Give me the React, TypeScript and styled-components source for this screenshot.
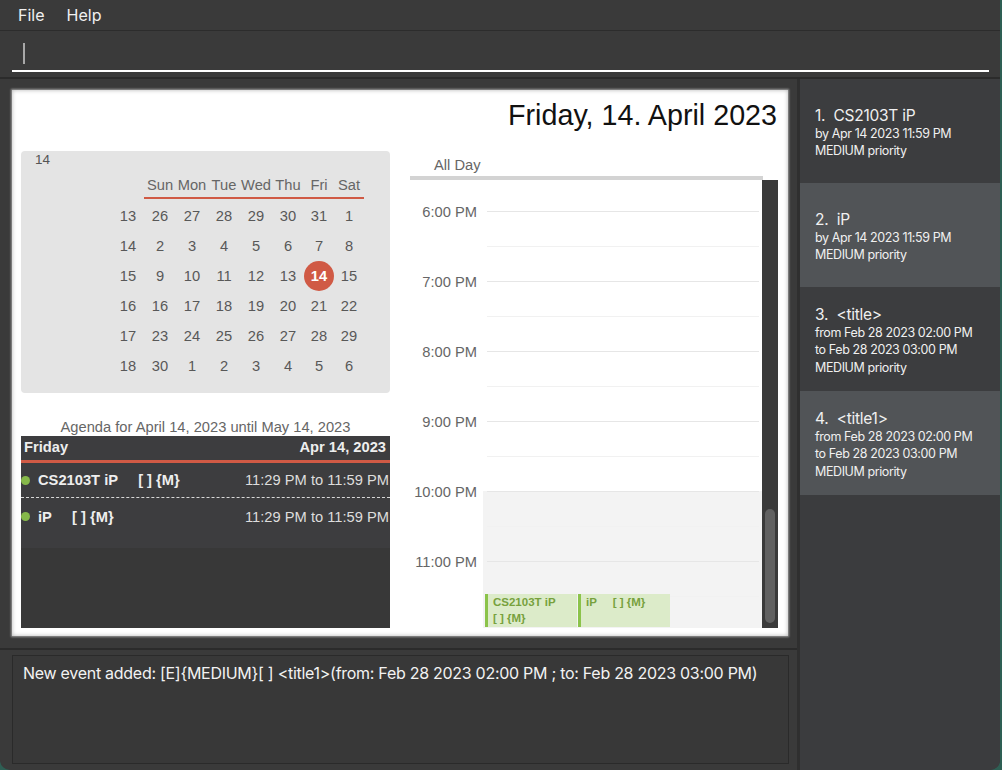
import React from "react";
import styled, { createGlobalStyle } from "styled-components";

const UI = `"Inter", "Noto Sans", sans-serif`;
const CAL = `"Liberation Sans", Arial, sans-serif`;
const CAL_SIZE = "14.7px";

const GlobalStyle = createGlobalStyle`
  * { box-sizing: border-box; }
  html, body { margin: 0; padding: 0; background: #2e5f54; }
  body { width: 1002px; height: 770px; overflow: hidden; }
`;

const Window = styled.div`
  width: 1000px;
  height: 770px;
  background: #3a3a3a;
  display: flex;
  flex-direction: column;
  border-radius: 0 0 10px 10px;
  overflow: hidden;
  font-family: ${UI};
`;

const MenuBar = styled.div`
  height: 31px;
  flex: none;
  display: flex;
  align-items: center;
  gap: 22px;
  padding-left: 18px;
  border-bottom: 1px solid #2c2c2c;
  color: #f0f0f0;
  font-size: 16px;
`;

const MenuItem = styled.span`
  line-height: 20px;
`;

const CommandBar = styled.div`
  height: 48px;
  flex: none;
  padding: 0 11px 5px 12px;
  border-bottom: 2px solid #2b2b2b;
`;

const CommandInput = styled.div`
  height: 41px;
  border-bottom: 2px solid #ffffff;
  padding: 12px 0 0 11px;
`;

const Caret = styled.div`
  width: 2px;
  height: 21px;
  background: #a8a8a8;
`;

const Main = styled.div`
  flex: 1;
  display: flex;
  min-height: 0;
`;

const LeftColumn = styled.div`
  width: 797px;
  flex: none;
  display: flex;
  flex-direction: column;
`;

const CalendarWrap = styled.div`
  height: 571px;
  flex: none;
  padding: 11px 9px 12px 12px;
  border-bottom: 2px solid #2b2b2b;
`;

const CalendarPanel = styled.div`
  height: 100%;
  background: #ffffff;
  box-shadow: 0 0 2px 1px rgba(170, 170, 170, 0.85), inset 0 0 4px rgba(0, 0, 0, 0.3);
  padding: 0 10px 8px 9px;
  display: flex;
  flex-direction: column;
  font-family: ${CAL};
`;

const DateTitle = styled.div`
  text-align: right;
  padding: 9px 1px 0 0;
  font-size: 28.7px;
  line-height: 32px;
  color: #111111;
`;

const CalendarBody = styled.div`
  flex: 1;
  margin-top: 20px;
  display: grid;
  grid-template-columns: 369px 368px;
  column-gap: 20px;
  min-height: 0;
`;

const LeftPane = styled.div`
  display: flex;
  flex-direction: column;
  min-height: 0;
`;

const MonthBox = styled.div`
  height: 242px;
  flex: none;
  background: #e4e4e4;
  border-radius: 4px;
  padding-top: 1px;
  color: #555555;
`;

const MonthLabel = styled.div`
  margin-left: 14px;
  font-size: 13.5px;
  line-height: 16px;
  color: #555555;
`;

const MonthGrid = styled.div`
  margin-left: 91px;
  display: grid;
  grid-template-columns: 32px 32px 32px 32px 32px 32px 30px 30px;
`;

const HeaderCell = styled.div<{ $blank?: boolean }>`
  padding: 9px 0 4px;
  line-height: 16px;
  font-size: ${CAL_SIZE};
  text-align: center;
  white-space: nowrap;
  color: #666666;
  border-bottom: 2px solid ${(p) => (p.$blank ? "transparent" : "#d05a45")};
  margin-bottom: 2px;
`;

const DayCell = styled.div`
  height: 30px;
  display: flex;
  align-items: center;
  justify-content: center;
  font-size: ${CAL_SIZE};
  color: #585858;
`;

const TodayMark = styled.span`
  width: 30px;
  height: 30px;
  border-radius: 50%;
  background: #d05a45;
  color: #ffffff;
  font-weight: bold;
  display: flex;
  align-items: center;
  justify-content: center;
`;

const AgendaLabel = styled.div`
  margin-top: 26px;
  margin-bottom: 1px;
  text-align: center;
  font-size: ${CAL_SIZE};
  line-height: 16px;
  color: #666666;
`;

const AgendaBox = styled.div`
  flex: 1;
  background: #383838;
  min-height: 0;
`;

const AgendaGroup = styled.div`
  background: #3d3d3f;
  padding-bottom: 13px;
`;

const AgendaHeader = styled.div`
  height: 27px;
  display: flex;
  justify-content: space-between;
  align-items: center;
  padding: 0 4px 3px 3px;
  border-bottom: 3px solid #d05a45;
  color: #eeeeee;
  font-weight: bold;
  font-size: ${CAL_SIZE};
`;

const AgendaRow = styled.div`
  height: 34px;
  display: flex;
  align-items: center;
  padding-right: 1px;
  font-size: ${CAL_SIZE};
  & + & {
    height: 38px;
    border-top: 1px dashed #d8d8d8;
  }
`;

const Dot = styled.span`
  width: 9px;
  height: 9px;
  border-radius: 50%;
  background: #86b84a;
  flex: none;
  margin-right: 8px;
`;

const AgendaTitle = styled.span`
  flex: 1;
  white-space: pre;
  font-weight: bold;
  color: #eeeeee;
`;

const AgendaTime = styled.span`
  color: #dddddd;
`;

const DayView = styled.div`
  display: flex;
  flex-direction: column;
  min-height: 0;
`;

const AllDayLabel = styled.div`
  padding: 6px 0 0 24px;
  margin-bottom: 3px;
  font-size: ${CAL_SIZE};
  line-height: 16px;
  color: #666666;
`;

const AllDayBar = styled.div`
  width: 353px;
  height: 4px;
  background: #d3d3d3;
`;

const DayScroll = styled.div`
  flex: 1;
  display: flex;
  min-height: 0;
`;

const TimeGrid = styled.div`
  flex: 1;
  overflow: hidden;
  display: grid;
  grid-template-columns: 73px 1fr;
  grid-auto-rows: 70px;
  grid-template-rows: 31px;
  align-content: start;
`;

const TimeLabel = styled.div`
  text-align: right;
  padding-right: 6px;
  font-size: ${CAL_SIZE};
  line-height: 16px;
  margin-top: -7px;
  color: #666666;
`;

const HourSlot = styled.div<{ $shaded?: boolean }>`
  background-color: ${(p) => (p.$shaded ? "#f3f3f3" : "transparent")};
  background-image: linear-gradient(#e6e6e6, #e6e6e6), linear-gradient(#f1f1f1, #f1f1f1);
  background-repeat: no-repeat;
  background-position: 4px 0, 4px 35px;
  background-size: calc(100% - 7px) 1px, calc(100% - 7px) 1px;
  display: flex;
  align-items: flex-start;
  gap: 1px;
  padding: 33px 0 0 2px;
  overflow: hidden;
`;

const LeadSlot = styled.div``;

const EventBlock = styled.div`
  width: 92px;
  height: 33px;
  flex: none;
  background: #dcebc9;
  border-left: 3px solid #8bc34a;
  padding: 0 0 0 5px;
  font-size: 11.5px;
  line-height: 16px;
  font-weight: bold;
  color: #77a13d;
  white-space: pre-wrap;
  overflow: hidden;
`;

const ScrollTrack = styled.div`
  width: 16px;
  flex: none;
  background: #3a3a3a;
  display: flex;
  flex-direction: column;
  justify-content: flex-end;
  padding: 0 3px 5px 3px;
`;

const ScrollThumb = styled.div`
  height: 114px;
  border-radius: 5px;
  background: #616161;
`;

const ResultWrap = styled.div`
  flex: 1;
  padding: 5px 8px 6px 12px;
`;

const ResultBox = styled.div`
  height: 100%;
  border: 1px solid #2a2a2a;
  background: #383838;
  padding: 8px 10px;
  color: #f2f2f2;
  font-size: 16px;
  letter-spacing: -0.28px;
  line-height: 19px;
`;

const TaskList = styled.div`
  width: 203px;
  flex: none;
  background: #3b3c3e;
  border-left: 3px solid #2f2f2f;
  display: flex;
  flex-direction: column;
`;

const TaskCard = styled.div<{ $alt?: boolean }>`
  height: 104px;
  flex: none;
  background: ${(p) => (p.$alt ? "#515457" : "#3c3d3f")};
  padding: 3px 0 0 15px;
  display: flex;
  flex-direction: column;
  justify-content: center;
  color: #f0f0f0;
`;

const TaskTitle = styled.div`
  font-size: 15.5px;
  letter-spacing: -0.25px;
  line-height: 19px;
  white-space: pre;
`;

const TaskLine = styled.div`
  font-size: 12.5px;
  letter-spacing: -0.4px;
  line-height: 17.5px;
`;

const weeks: [number, number[]][] = [
  [13, [26, 27, 28, 29, 30, 31, 1]],
  [14, [2, 3, 4, 5, 6, 7, 8]],
  [15, [9, 10, 11, 12, 13, 14, 15]],
  [16, [16, 17, 18, 19, 20, 21, 22]],
  [17, [23, 24, 25, 26, 27, 28, 29]],
  [18, [30, 1, 2, 3, 4, 5, 6]],
];

const dayNames = ["Sun", "Mon", "Tue", "Wed", "Thu", "Fri", "Sat"];

const hours = ["6:00 PM", "7:00 PM", "8:00 PM", "9:00 PM", "10:00 PM", "11:00 PM"];

const tasks = [
  { title: "1.  CS2103T iP", lines: ["by Apr 14 2023 11:59 PM", "MEDIUM priority"] },
  { title: "2.  iP", lines: ["by Apr 14 2023 11:59 PM", "MEDIUM priority"] },
  {
    title: "3.  <title>",
    lines: ["from Feb 28 2023 02:00 PM", "to Feb 28 2023 03:00 PM", "MEDIUM priority"],
  },
  {
    title: "4.  <title1>",
    lines: ["from Feb 28 2023 02:00 PM", "to Feb 28 2023 03:00 PM", "MEDIUM priority"],
  },
];

export default function App() {
  return (
    <>
      <GlobalStyle />
      <Window>
        <MenuBar>
          <MenuItem>File</MenuItem>
          <MenuItem>Help</MenuItem>
        </MenuBar>
        <CommandBar>
          <CommandInput>
            <Caret />
          </CommandInput>
        </CommandBar>
        <Main>
          <LeftColumn>
            <CalendarWrap>
              <CalendarPanel>
                <DateTitle>Friday, 14. April 2023</DateTitle>
                <CalendarBody>
                  <LeftPane>
                    <MonthBox>
                      <MonthLabel>14</MonthLabel>
                      <MonthGrid>
                        <HeaderCell $blank />
                        {dayNames.map((d) => (
                          <HeaderCell key={d}>{d}</HeaderCell>
                        ))}
                        {weeks.map(([wk, days]) => (
                          <React.Fragment key={wk}>
                            <DayCell>{wk}</DayCell>
                            {days.map((d, i) => (
                              <DayCell key={i}>
                                {wk === 15 && d === 14 ? <TodayMark>14</TodayMark> : d}
                              </DayCell>
                            ))}
                          </React.Fragment>
                        ))}
                      </MonthGrid>
                    </MonthBox>
                    <AgendaLabel>Agenda for April 14, 2023 until May 14, 2023</AgendaLabel>
                    <AgendaBox>
                      <AgendaGroup>
                        <AgendaHeader>
                          <span>Friday</span>
                          <span>Apr 14, 2023</span>
                        </AgendaHeader>
                        <AgendaRow>
                          <Dot />
                          <AgendaTitle>{"CS2103T iP     [ ] {M}"}</AgendaTitle>
                          <AgendaTime>11:29 PM to 11:59 PM</AgendaTime>
                        </AgendaRow>
                        <AgendaRow>
                          <Dot />
                          <AgendaTitle>{"iP     [ ] {M}"}</AgendaTitle>
                          <AgendaTime>11:29 PM to 11:59 PM</AgendaTime>
                        </AgendaRow>
                      </AgendaGroup>
                    </AgendaBox>
                  </LeftPane>
                  <DayView>
                    <AllDayLabel>All Day</AllDayLabel>
                    <AllDayBar />
                    <DayScroll>
                      <TimeGrid>
                        <LeadSlot />
                        <LeadSlot />
                        {hours.map((h, i) => (
                          <React.Fragment key={h}>
                            <TimeLabel>{h}</TimeLabel>
                            <HourSlot $shaded={i >= 4}>
                              {i === 5 && (
                                <>
                                  <EventBlock>{"CS2103T iP     [\u00a0] {M}"}</EventBlock>
                                  <EventBlock>{"iP     [\u00a0] {M}"}</EventBlock>
                                </>
                              )}
                            </HourSlot>
                          </React.Fragment>
                        ))}
                      </TimeGrid>
                      <ScrollTrack>
                        <ScrollThumb />
                      </ScrollTrack>
                    </DayScroll>
                  </DayView>
                </CalendarBody>
              </CalendarPanel>
            </CalendarWrap>
            <ResultWrap>
              <ResultBox>
                New event added: [E]{"{MEDIUM}"}[ ] &lt;title1&gt;(from: Feb 28 2023 02:00 PM ; to: Feb 28 2023 03:00 PM)
              </ResultBox>
            </ResultWrap>
          </LeftColumn>
          <TaskList>
            {tasks.map((t, i) => (
              <TaskCard key={t.title} $alt={i % 2 === 1}>
                <TaskTitle>{t.title}</TaskTitle>
                {t.lines.map((l) => (
                  <TaskLine key={l}>{l}</TaskLine>
                ))}
              </TaskCard>
            ))}
          </TaskList>
        </Main>
      </Window>
    </>
  );
}
